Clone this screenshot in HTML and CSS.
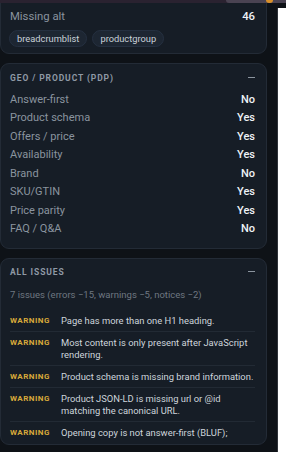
FILE: index.html
```html
<!DOCTYPE html>
<html lang="en">
<head>
<meta charset="utf-8">
<title>Audit panel</title>
<link rel="stylesheet" href="styles.css">
</head>
<body>
<div class="topbar"><span class="topbar-hl"></span><span class="topbar-dot"></span></div>
<div class="layout">
  <main class="panel">
    <section class="card card-cut">
      <div class="row"><span class="label">Missing alt</span><span class="value">46</span></div>
      <div class="chips"><span class="chip">breadcrumblist</span><span class="chip">productgroup</span></div>
    </section>

    <section class="card card-geo">
      <div class="card-head"><span class="card-title">GEO / PRODUCT (PDP)</span><span class="collapse"></span></div>
      <div class="rows">
        <div class="row"><span class="label">Answer-first</span><span class="value">No</span></div>
        <div class="row"><span class="label">Product schema</span><span class="value">Yes</span></div>
        <div class="row"><span class="label">Offers / price</span><span class="value">Yes</span></div>
        <div class="row"><span class="label">Availability</span><span class="value">Yes</span></div>
        <div class="row"><span class="label">Brand</span><span class="value">No</span></div>
        <div class="row"><span class="label">SKU/GTIN</span><span class="value">Yes</span></div>
        <div class="row"><span class="label">Price parity</span><span class="value">Yes</span></div>
        <div class="row"><span class="label">FAQ / Q&amp;A</span><span class="value">No</span></div>
      </div>
    </section>

    <section class="card card-issues">
      <div class="card-head"><span class="card-title">ALL ISSUES</span><span class="collapse"></span></div>
      <p class="summary">7 issues (errors −15, warnings −5, notices −2)</p>
      <ul class="issues">
        <li class="issue"><span class="sev">WARNING</span><span class="msg">Page has more than one H1 heading.</span></li>
        <li class="issue"><span class="sev">WARNING</span><span class="msg">Most content is only present after JavaScript rendering.</span></li>
        <li class="issue"><span class="sev">WARNING</span><span class="msg">Product schema is missing brand information.</span></li>
        <li class="issue"><span class="sev">WARNING</span><span class="msg">Product JSON-LD is missing url or @id matching the canonical URL.</span></li>
        <li class="issue"><span class="sev">WARNING</span><span class="msg">Opening copy is not answer-first (BLUF);</span></li>
      </ul>
    </section>
  </main>
  <aside class="edge"></aside>
</div>
</body>
</html>
```

FILE: styles.css
```css
* { box-sizing: border-box; }
html, body { height: 100%; }
body {
  margin: 0;
  background: #0e1217;
  font-family: Roboto, "Liberation Sans", sans-serif;
  color: #e6edf3;
  overflow: hidden;
  position: relative;
}
.topbar {
  position: absolute;
  top: 0; left: 0; right: 0;
  height: 3px;
  background: #2a2230;
  z-index: 2;
}
.topbar-hl {
  position: absolute;
  left: 226px; right: 0; top: 0; height: 3px;
  background: #4a4352;
  border-radius: 0 0 0 6px;
}
.topbar-dot {
  position: absolute;
  left: 266px; width: 7px; top: 0; height: 3px;
  background: #d8902a;
  border-radius: 0 0 3px 3px;
}
.layout {
  display: flex;
  height: 100%;
}
.panel {
  flex: 1;
  padding-right: 10px;
}
.edge {
  width: 9px;
  margin-top: 8px;
  background: #ffffff;
  border-left: 1px solid #2e3238;
}
.card {
  background: #161d26;
  border: 1px solid #232b36;
  border-radius: 9px;
  margin-top: 9px;
  padding: 0 11px 0 9px;
}
.card-cut {
  margin-top: -12px;
  padding-top: 18px;
  padding-bottom: 6px;
}
.card-geo {
  padding-top: 8px;
  padding-bottom: 10px;
}
.card-issues {
  padding-top: 7px;
  padding-bottom: 1px;
}
.row {
  display: flex;
  justify-content: space-between;
  align-items: center;
  height: 18.5px;
  font-size: 11px;
}
.card-cut .row { height: 18px; font-size: 11.3px; }
.label { color: #8a949f; }
.value { color: #eef2f6; font-weight: 500; }
.chips {
  display: flex;
  gap: 5px;
  margin-top: 5px;
  margin-left: -1px;
}
.chip {
  height: 17px;
  line-height: 15px;
  padding: 0 7px;
  font-size: 9.3px;
  color: #c9d1d9;
  background: #1d2632;
  border: 1px solid #253040;
  border-radius: 9px;
}
.card-head {
  display: flex;
  justify-content: space-between;
  align-items: center;
  height: 11px;
}
.card-title {
  font-size: 8.5px;
  font-weight: 700;
  letter-spacing: 0.9px;
  color: #8f99a5;
}
.collapse {
  width: 7px;
  height: 1.5px;
  background: #8b949e;
  margin-right: 0;
}
.rows { margin-top: 7px; }
.summary {
  margin: 12px 0 0;
  font-size: 9.5px;
  line-height: 12px;
  color: #6e7781;
}
.issues {
  list-style: none;
  margin: 9px 0 0;
  padding: 0;
}
.issue {
  display: flex;
  padding: 4.5px 0;
  border-bottom: 1px solid #222a34;
}
.issue:last-child { border-bottom: 0; }
.sev {
  flex: 0 0 51px;
  font-size: 8px;
  line-height: 12px;
  font-weight: 700;
  letter-spacing: 0.5px;
  color: #d8a93a;
}
.msg {
  font-size: 9.4px;
  line-height: 12px;
  color: #ced5dc;
}
```
